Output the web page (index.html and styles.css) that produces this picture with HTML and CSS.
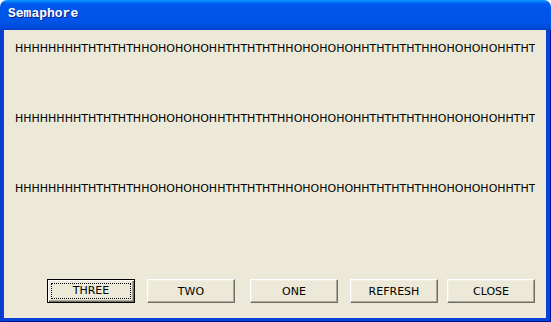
FILE: index.html
```html
<!DOCTYPE html>
<html lang="en-US">
<head>
    <meta charset="utf-8" />
    <title>Semaphore</title>
    <link rel="stylesheet" href="styles.css">
</head>
<body>
<div class="window">
    <div class="titlebar">Semaphore</div>
    <div class="frame">
        <div class="client">
            <div class="line">HHHHHHHHTHTHTHTHHOHOHOHOHHTHTHTHTHHOHOHOHOHHTHTHTHTHHOHOHOHOHHTHTHTHTHHOHOHOHOH</div>
            <div class="line">HHHHHHHHTHTHTHTHHOHOHOHOHHTHTHTHTHHOHOHOHOHHTHTHTHTHHOHOHOHOHHTHTHTHTHHOHOHOHOH</div>
            <div class="line">HHHHHHHHTHTHTHTHHOHOHOHOHHTHTHTHTHHOHOHOHOHHTHTHTHTHHOHOHOHOHHTHTHTHTHHOHOHOHOH</div>
            <div class="buttons">
                <button class="button default"><span class="focus">THREE</span></button>
                <button class="button gap12">TWO</button>
                <button class="button gap15">ONE</button>
                <button class="button gap12">REFRESH</button>
                <button class="button gap9">CLOSE</button>
            </div>
        </div>
    </div>
</div>
</body>
</html>
```

FILE: styles.css
```css
body {margin:0; background-color:#fff; font-family:"DejaVu Sans", Verdana, sans-serif;}
.window {width:551px; height:322px; display:flex; flex-direction:column;}
.titlebar {height:30px; box-sizing:border-box; padding:6px 0 0 8px; border-radius:7px 7px 0 0;
    background:linear-gradient(to bottom, #0997ff 0px, #0058ee 4px, #0055ea 12px, #0054e8 22px, #0048d8 28px, #003dc8 30px);
    color:#fff; font-family:"Liberation Mono", monospace; font-weight:bold; font-size:13px; line-height:15px;
    text-shadow:1px 1px 0 #0a1e8c;}
.frame {flex:1; display:flex; min-width:0; background-color:#0841d8; padding:0 5px 4px 4px;
    box-shadow:inset 1px 0 0 #0838c8, inset -1px 0 0 #00138c, inset 0 -1px 0 #00138c;}
.client {flex:1; min-width:0; display:flex; flex-direction:column; background-color:#ece9d8; padding:12px 11px 15px 11px;}
.line {width:520px; height:13px; font-size:11px; line-height:13px; color:#000; white-space:nowrap; overflow:hidden; margin-bottom:57px;}
.buttons {margin-top:auto; display:flex; padding-left:32px;}
.button {width:88px; height:24px; box-sizing:border-box; background-color:#ece9d8; font-family:"DejaVu Sans", Verdana, sans-serif;
    font-size:11px; color:#000; padding:0; border-style:solid; border-width:1px; border-color:#fff #716f64 #716f64 #fff;
    box-shadow:inset -1px -1px 0 #aca899, inset 1px 1px 0 #f1efe2;}
.default {border:1px solid #000; box-shadow:inset 1px 1px 0 #fff, inset -1px -1px 0 #716f64, inset -2px -2px 0 #aca899; padding:3px;}
.focus {display:block; height:100%; box-sizing:border-box; border:1px dotted #000; line-height:14px;}
.gap12 {margin-left:12px;}
.gap15 {margin-left:15px;}
.gap9 {margin-left:9px;}
```
